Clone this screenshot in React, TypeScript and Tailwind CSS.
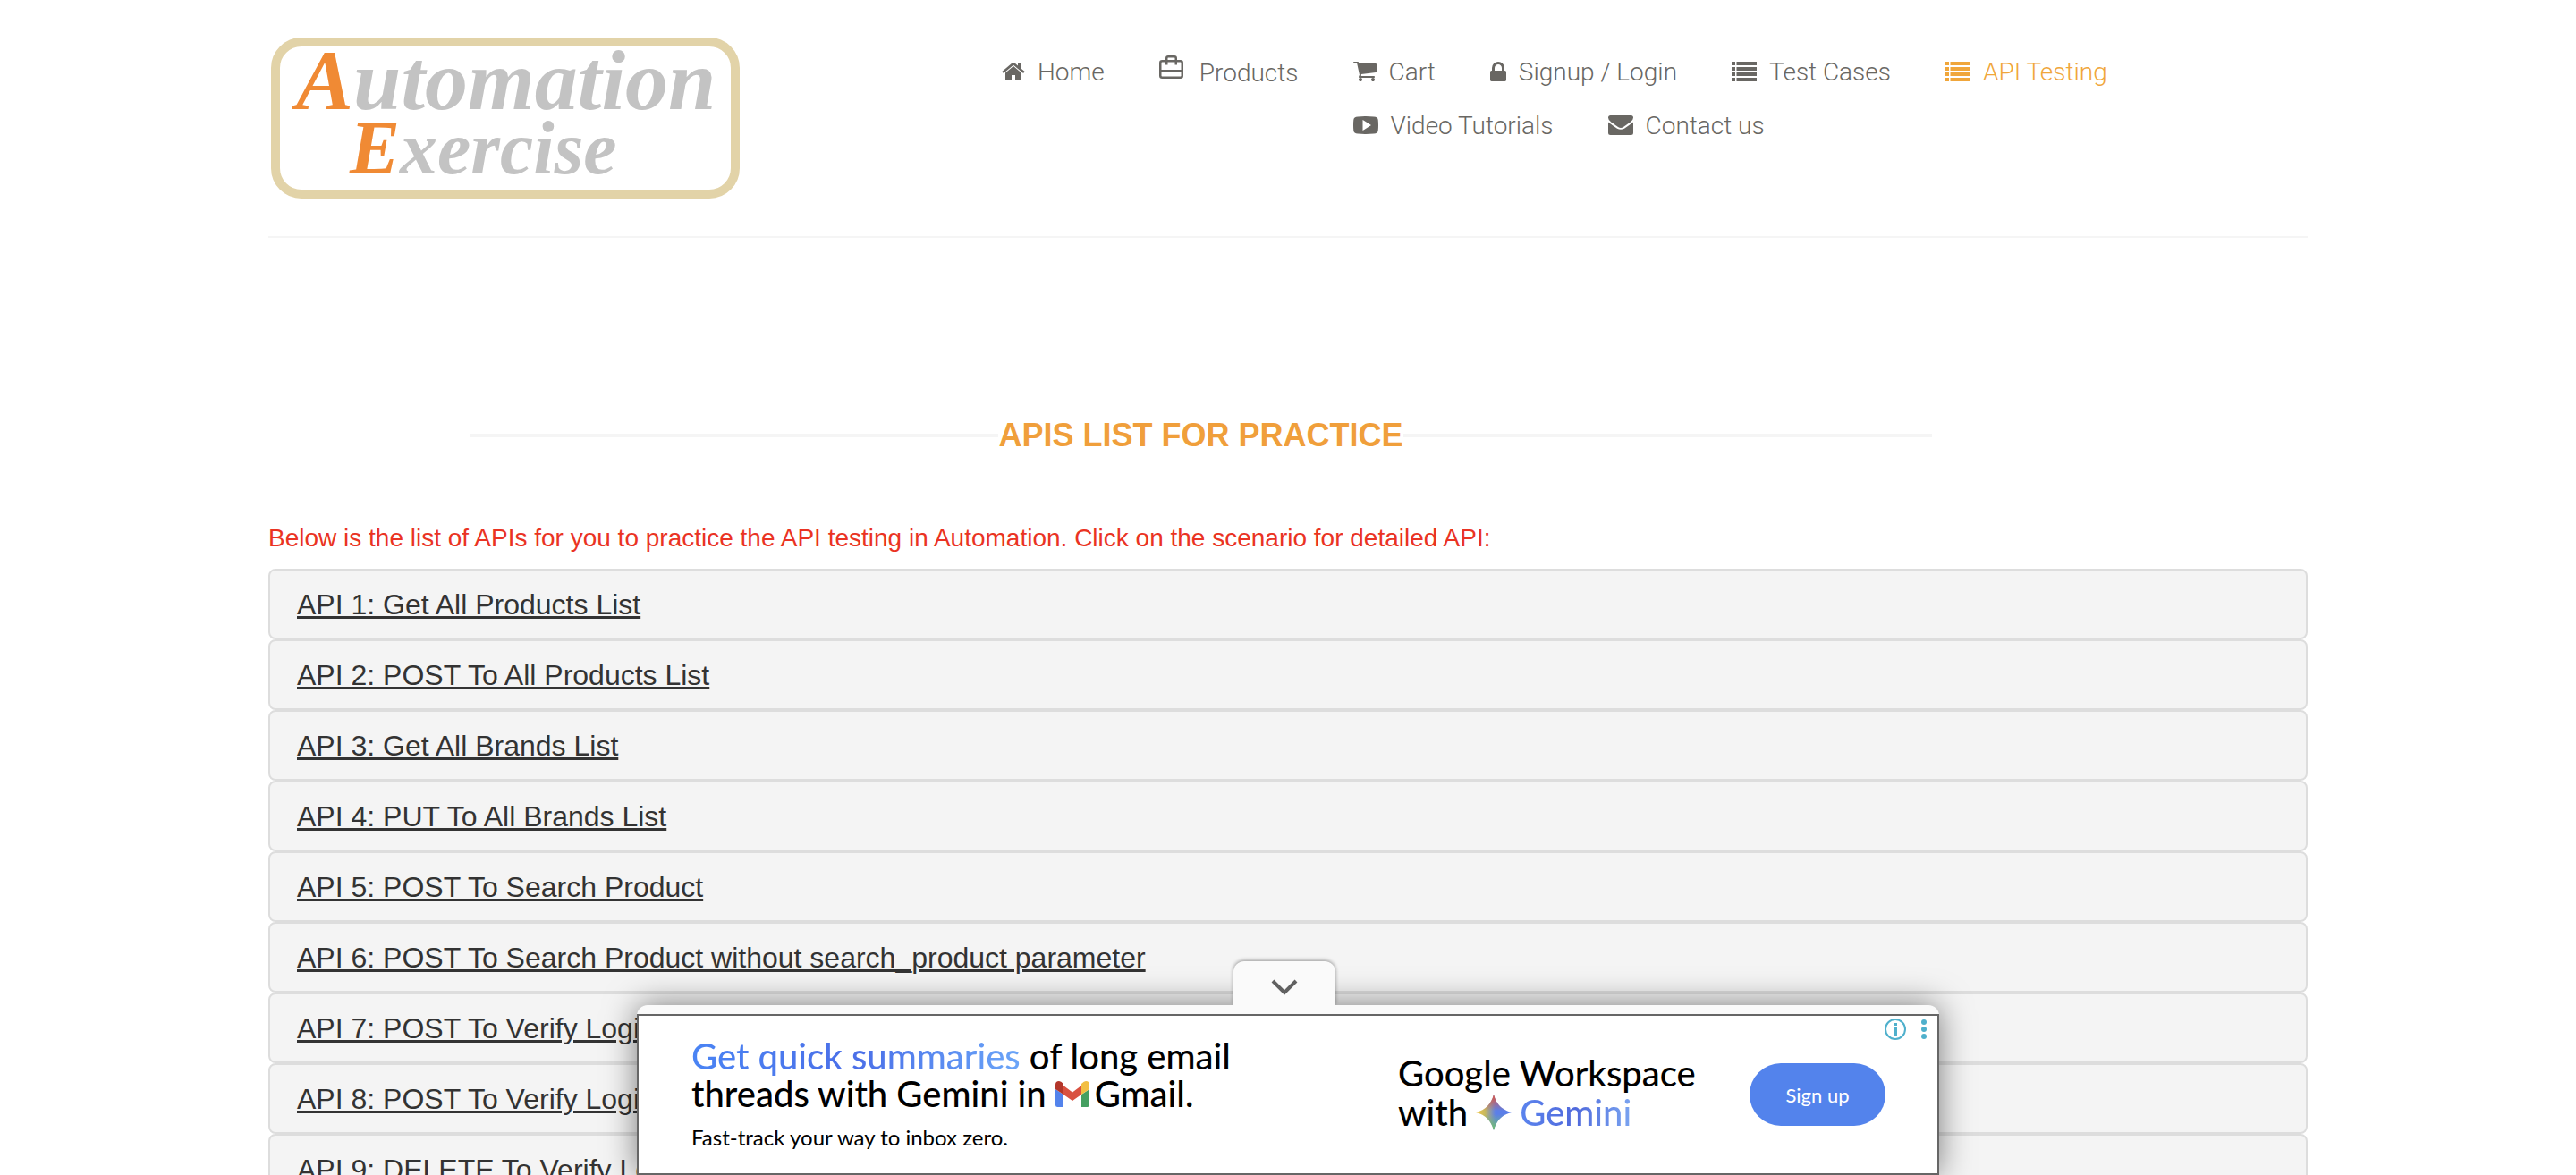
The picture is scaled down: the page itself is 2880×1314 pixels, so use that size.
import React from "react";

type IconProps = { className?: string };

const HomeIcon = ({ className }: IconProps) => (
  <svg viewBox="64 256 1664 1280" className={className} fill="currentColor" aria-hidden="true">
    <path d="M1472 992v480q0 26-19 45t-45 19h-384v-384h-256v384h-384q-26 0-45-19t-19-45v-480q0-1 .5-3t.5-3l575-474 575 474q1 2 1 6zm223-69l-62 74q-8 9-21 11h-3q-13 0-21-7l-692-577-692 577q-12 8-24 7-13-2-21-11l-62-74q-8-10-7-23.500t11-21.500l719-599q32-26 76-26t76 26l244 204v-195q0-14 9-23t23-9h192q14 0 23 9t9 23v408l219 182q10 8 11 21.500t-7 23.500z" />
  </svg>
);

const BagIcon = ({ className }: IconProps) => (
  <svg viewBox="0 0 27 26" className={className} fill="none" stroke="currentColor" strokeWidth="2.5" aria-hidden="true">
    <rect x="1.25" y="6.25" width="24.500" height="18.500" rx="2" />
    <path d="M2 17.500H25" strokeWidth="3" />
    <path d="M8.250 10.500V3Q8.250 1.250 10 1.250H17Q18.750 1.250 18.750 3V10.500" />
  </svg>
);

const CartIcon = ({ className }: IconProps) => (
  <svg viewBox="64 256 1664 1408" className={className} fill="currentColor" aria-hidden="true">
    <path d="M704 1536q0 52-38 90t-90 38-90-38-38-90 38-90 90-38 90 38 38 90zm896 0q0 52-38 90t-90 38-90-38-38-90 38-90 90-38 90 38 38 90zm128-1088v512q0 24-16.500 42.500t-40.500 21.500l-1044 122q13 60 13 70 0 16-24 64h920q26 0 45 19t19 45-19 45-45 19h-1024q-26 0-45-19t-19-45q0-11 8-31.500t16-36 21.500-40 15.500-29.500l-177-823h-204q-26 0-45-19t-19-45 19-45 45-19h256q16 0 28.500 6.500t19.500 15.500 13 24.500 8 26 5.500 29.500 4.500 26h1201q26 0 45 19t19 45z" />
  </svg>
);

const LockIcon = ({ className }: IconProps) => (
  <svg viewBox="320 128 1152 1408" className={className} fill="currentColor" aria-hidden="true">
    <path d="M640 768h512v-192q0-106-75-181t-181-75-181 75-75 181v192zm832 96v576q0 40-28 68t-68 28h-960q-40 0-68-28t-28-68v-576q0-40 28-68t68-28h32v-192q0-184 132-316t316-132 316 132 132 316v192h32q40 0 68 28t28 68z" />
  </svg>
);

const ListIcon = ({ className }: IconProps) => (
  <svg viewBox="0 0 28 22" className={className} fill="currentColor" aria-hidden="true">
    {[0, 6, 12, 18].map((y) => (
      <g key={y}>
        <rect x="0" y={y} width="4" height="4" />
        <rect x="5.500" y={y} width="22.500" height="4" />
      </g>
    ))}
  </svg>
);

const VideoIcon = ({ className }: IconProps) => (
  <svg viewBox="0 0 28 20" className={className} aria-hidden="true">
    <path fill="currentColor" fillRule="evenodd" d="M5 .4Q14-.4 23 .4Q27.400.6 27.700 4Q28.300 10 27.700 16Q27.400 19.400 23 19.600Q14 20.400 5 19.600Q.6 19.400.3 16Q-.3 10 .3 4Q.6.600 5 .4ZM10.500 4V16L20 10Z" />
  </svg>
);

const MailIcon = ({ className }: IconProps) => (
  <svg viewBox="0 0 28 22" className={className} fill="currentColor" aria-hidden="true">
    <path d="M2.500 0H25.500Q28 0 28 2.500Q28 5 25 7.300L17 13Q14 15 11 13L3 7.300Q0 5 0 2.500Q0 0 2.500 0Z" />
    <path d="M0 7.500Q5 11.500 10 14.700Q14 17 18 14.700Q23 11.500 28 7.500V19.500Q28 22 25.500 22H2.500Q0 22 0 19.500Z" />
  </svg>
);

const GmailIcon = ({ className }: IconProps) => (
  <svg viewBox="0 0 38 29" className={className} aria-hidden="true">
    <path fill="#5383ec" d="M0 9V26.500Q0 29 2.500 29H9V15Z" />
    <path fill="#459f61" d="M38 9V26.500Q38 29 35.500 29H29V15Z" />
    <path fill="#d95140" d="M9 5L19 12.500L29 5V15L19 22L9 15Z" />
    <path fill="#b3362a" d="M0 4Q0 0 4 0Q6 0 9 3V15L0 9Z" />
    <path fill="#f2be42" d="M38 4Q38 0 34 0Q32 0 29 3V15L38 9Z" />
  </svg>
);

const GeminiStar = ({ className }: IconProps) => (
  <svg viewBox="0 0 40 40" className={className} aria-hidden="true">
    <defs>
      <linearGradient id="starBase" x1="0" y1="0" x2="1" y2="0">
        <stop offset="0" stopColor="#f2c94c" />
        <stop offset="0.25" stopColor="#c9b95c" />
        <stop offset="0.55" stopColor="#5b7fe8" />
        <stop offset="1" stopColor="#5b7fe8" />
      </linearGradient>
      <linearGradient id="starTop" x1="0" y1="0" x2="0" y2="1">
        <stop offset="0.05" stopColor="#d6574b" />
        <stop offset="0.45" stopColor="#d6574b" stopOpacity="0" />
      </linearGradient>
      <linearGradient id="starBottom" x1="0" y1="1" x2="0" y2="0">
        <stop offset="0.05" stopColor="#6fbf73" />
        <stop offset="0.45" stopColor="#6fbf73" stopOpacity="0" />
      </linearGradient>
    </defs>
    {["url(#starBase)", "url(#starTop)", "url(#starBottom)"].map((fill) => (
      <path key={fill} fill={fill} d="M20 0C23 11 29 17 40 20C29 23 23 29 20 40C17 29 11 23 0 20C11 17 17 11 20 0Z" />
    ))}
  </svg>
);

const navItems = [
  { label: "Home", icon: <HomeIcon className="w-[26px]" />, style: "h-[60px]" },
  { label: "Products", icon: <BagIcon className="mr-1 mb-3 w-[27px]" />, style: "h-[62px]" },
  { label: "Cart", icon: <CartIcon className="w-[26px]" />, style: "h-[60px]" },
  { label: "Signup / Login", icon: <LockIcon className="w-[18px]" />, style: "h-[60px]" },
  { label: "Test Cases", icon: <ListIcon className="w-7" />, style: "h-[60px]" },
  { label: "API Testing", icon: <ListIcon className="w-7" />, style: "h-[60px] text-[#f0a63b]" },
  { label: "Video Tutorials", icon: <VideoIcon className="w-7" />, style: "h-[60px]" },
  { label: "Contact us", icon: <MailIcon className="w-7" />, style: "h-[60px]" },
];

const apis = [
  "API 1: Get All Products List",
  "API 2: POST To All Products List",
  "API 3: Get All Brands List",
  "API 4: PUT To All Brands List",
  "API 5: POST To Search Product",
  "API 6: POST To Search Product without search_product parameter",
  "API 7: POST To Verify Login with valid details",
  "API 8: POST To Verify Login without email parameter",
  "API 9: DELETE To Verify Login",
];

function Logo() {
  return (
    <a href="#" className="block h-[180px] w-[524px] shrink-0 rounded-[34px] border-[10px] border-[#e2d3a8] bg-white pl-[18px] font-['Liberation_Serif'] leading-[76px] font-bold text-[#c3c3c3] italic">
      <span className="block text-[96px]"><span className="text-[#f08a34]">A</span>utomation</span>
      <span className="block pl-[60px] text-[84px]"><span className="text-[#f08a34]">E</span>xercise</span>
    </a>
  );
}

function Header() {
  return (
    <header className="flex items-start border-b-2 border-[#f5f5f5] pb-[42px] pl-[3px]">
      <Logo />
      <nav className="ml-[293px] flex-1 pt-2 font-['Roboto'] text-[28px] font-light text-[#696763]">
        <ul>
          {navItems.map((item) => (
            <li key={item.label} className="float-left mr-[61px]">
              <a href="#" className={`flex items-center gap-[14px] ${item.style}`}>
                {item.icon}
                <span className="pt-[2px]">{item.label}</span>
              </a>
            </li>
          ))}
        </ul>
      </nav>
    </header>
  );
}

function AdBanner() {
  return (
    <aside className="fixed bottom-0 left-1/2 w-[1456px] -translate-x-1/2 font-['Lato'] text-black">
      <div className="rounded-t-[12px] bg-[#fafafa] pt-[10px] shadow-[0_0_36px_rgba(0,0,0,0.5)]">
        <button aria-label="Collapse ad" className="absolute -top-[49px] left-[667px] flex h-[49px] w-[114px] items-center justify-center rounded-t-[12px] bg-[#fafafa] pt-2 shadow-[0_-1px_4px_rgba(0,0,0,0.4)] [clip-path:inset(-10px_-10px_0_-10px)]">
          <svg viewBox="0 0 30 20" className="w-[30px]" fill="none" stroke="#616161" strokeWidth="4" aria-hidden="true">
            <path d="M2 3L15 16L28 3" />
          </svg>
        </button>
        <div className="relative flex h-[180px] border-2 border-[#666] bg-white pl-[59px]">
          <div className="w-[790px] pt-6">
            <p className="text-[40px] leading-[42px] font-medium">
              <span className="bg-linear-to-r from-[#4a84f4] via-[#4b6fe8] to-[#6ba5f8] bg-clip-text text-transparent">Get quick summaries</span> of long email
              <br />
              threads with Gemini in <GmailIcon className="mr-[6px] inline w-[38px] align-baseline" />Gmail.
            </p>
            <p className="mt-3 text-[24px] leading-8">Fast-track your way to inbox zero.</p>
          </div>
          <div className="w-[393px] pt-[42px] text-[40px] leading-[44px] font-medium">
            Google Workspace
            <div className="flex items-center gap-[9px]">
              with <GeminiStar className="size-[40px]" />
              <span className="bg-linear-to-r from-[#5b84ee] via-[#5069dc] to-[#7ba4f0] bg-clip-text text-transparent">Gemini</span>
            </div>
          </div>
          <button className="mt-[53px] h-[70px] w-[152px] rounded-full bg-[#5383ec] text-[22px] text-white">Sign up</button>
          <button aria-label="Ad information" className="absolute top-[3px] right-[35px] text-[#4fb0cc]">
            <svg viewBox="0 0 24 24" className="size-6" fill="none" stroke="currentColor" strokeWidth="2" aria-hidden="true">
              <circle cx="12" cy="12" r="11" />
              <path strokeWidth="4" d="M12 10V19M12 5V8" />
            </svg>
          </button>
          <button aria-label="Ad options" className="absolute top-[3px] right-[12px] text-[#4fb0cc]">
            <svg viewBox="0 0 6 24" className="h-6" fill="currentColor" aria-hidden="true">
              <circle cx="3" cy="4" r="3" />
              <circle cx="3" cy="12" r="3" />
              <circle cx="3" cy="20" r="3" />
            </svg>
          </button>
        </div>
      </div>
    </aside>
  );
}

export default function App() {
  return (
    <div className="h-screen overflow-hidden bg-white font-['Liberation_Sans',sans-serif]">
      <div className="mx-[300px] pt-[42px]">
        <Header />
        <main>
          <h1 className="mt-[199px] mr-[420px] ml-[225px] flex items-center text-[36px] leading-[44px] font-bold text-[#f09f3b] before:h-1 before:flex-1 before:bg-[#f5f5f5] after:h-1 after:flex-1 after:bg-[#f5f5f5]">
            APIS LIST FOR PRACTICE
          </h1>
          <p className="mt-[73px] text-[28px] leading-10 text-[#ea3323]">
            Below is the list of APIs for you to practice the API testing in Automation. Click on the scenario for detailed API:
          </p>
          <ul className="mt-[14px]">
            {apis.map((api) => (
              <li key={api} className="h-[79px] rounded-lg border-2 border-[#ddd] bg-[#f4f4f4] px-[30px] text-[32px] leading-[77px] text-[#333]">
                <a href="#" className="underline decoration-[3px]">{api}</a>
              </li>
            ))}
          </ul>
        </main>
      </div>
      <AdBanner />
    </div>
  );
}
